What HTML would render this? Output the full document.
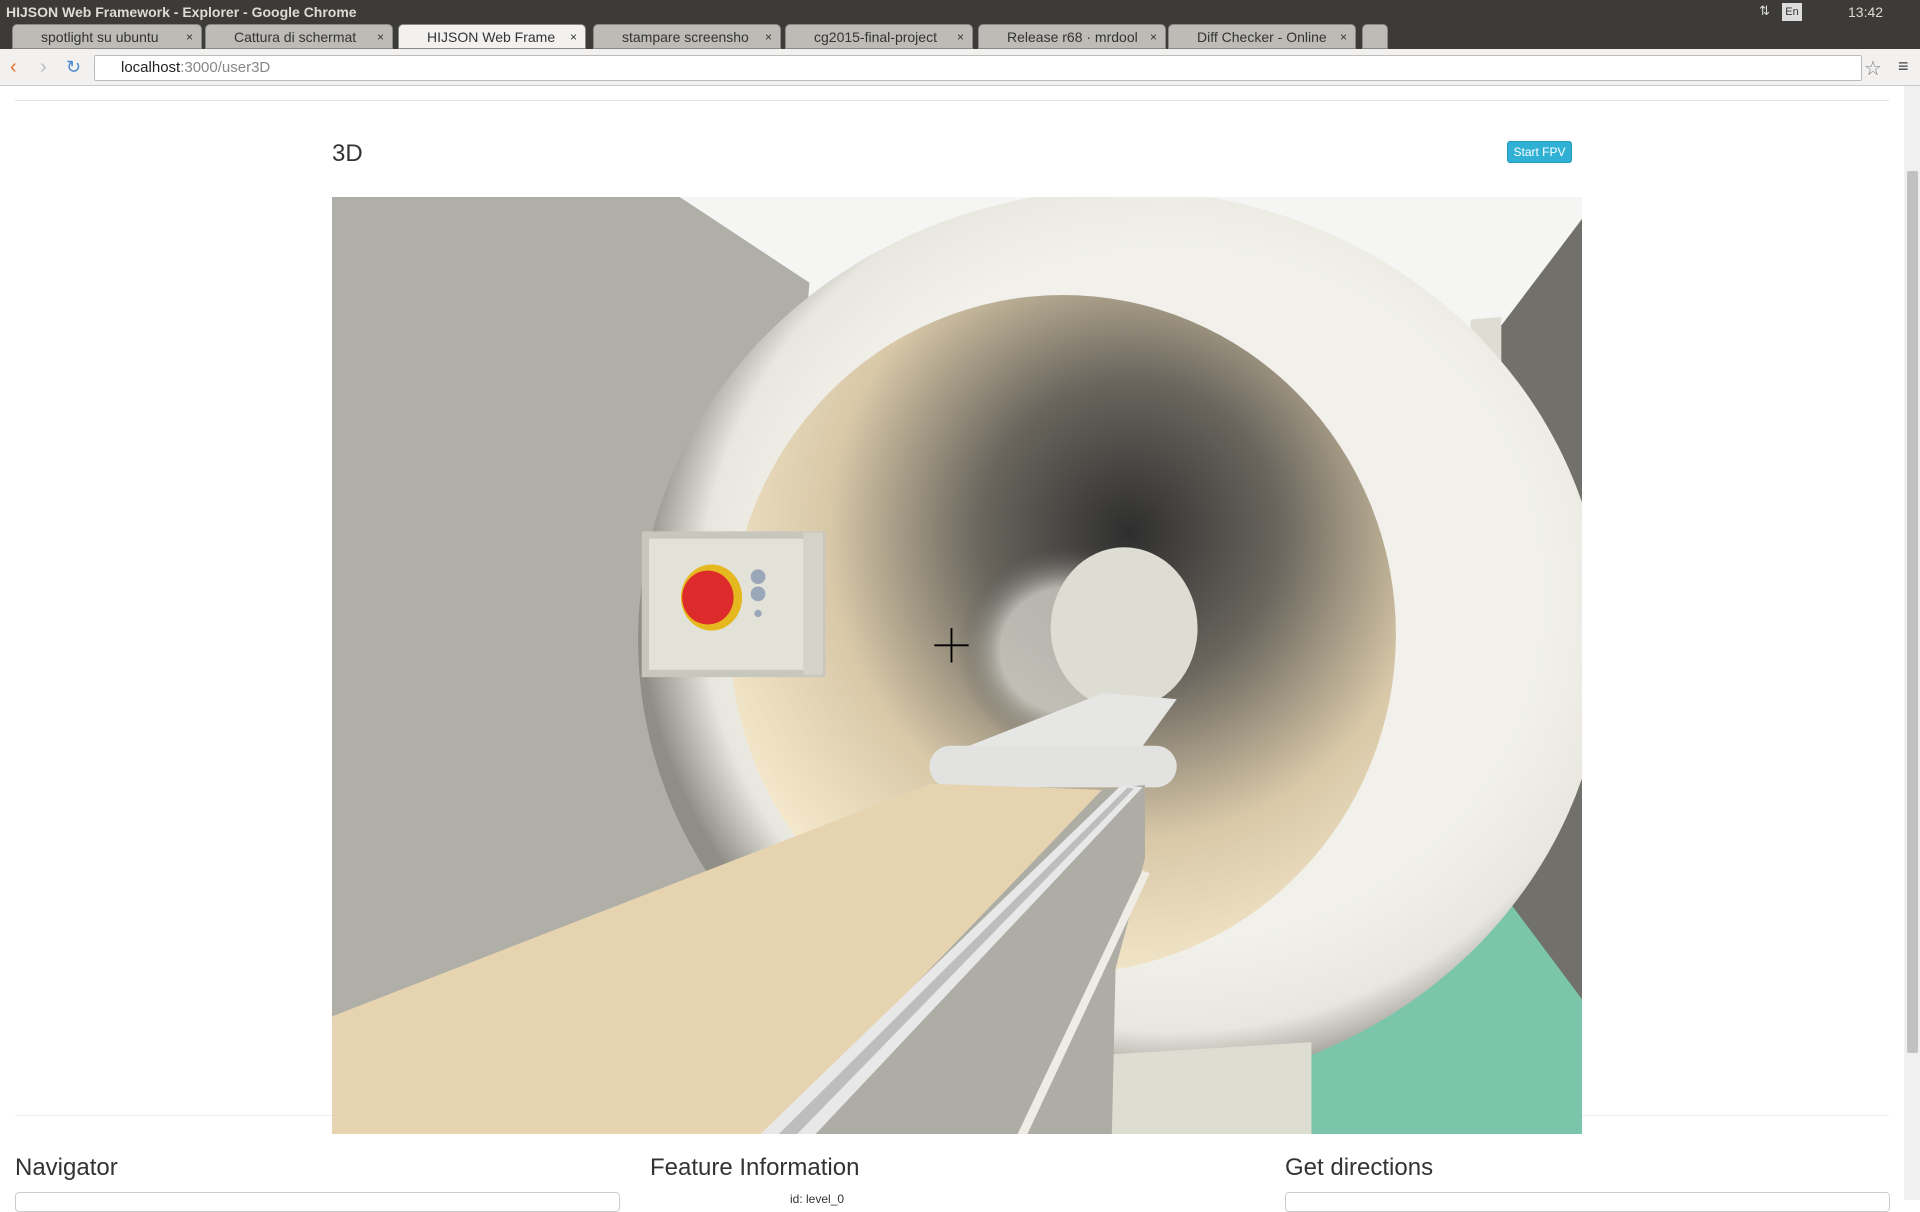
<!DOCTYPE html>
<html><head><meta charset="utf-8"><style>
*{margin:0;padding:0;box-sizing:border-box}
body{width:1920px;height:1200px;overflow:hidden;background:#fff;font-family:"Liberation Sans",sans-serif;position:relative}
.abs{position:absolute}
#title{left:0;top:0;width:1920px;height:24px;background:#3c3b37;color:#dfdbd2;font-size:14px;font-weight:bold;line-height:24px;padding-left:6px}
#tabs{left:0;top:24px;width:1920px;height:25px;background:#3c3b37}
.tab{position:absolute;top:0;height:25px;background:#bdbbb6;border-radius:5px 5px 0 0;font-size:14px;line-height:25px;color:#333;padding-left:28px;white-space:nowrap;overflow:hidden;border:1px solid #888}
.tab.act{background:#f2f1f0;color:#333}
.tab i{position:absolute;right:8px;top:0;font-style:normal;font-size:12px}
#bar{left:0;top:49px;width:1920px;height:37px;background:#f2f1f0;border-bottom:1px solid #ccc}
#url{left:94px;top:55px;width:1768px;height:26px;background:#fff;border:1px solid #bbb;border-radius:2px;font-size:15px;line-height:24px;padding-left:26px;color:#222}
#url span{color:#888}
h3{position:absolute;font-weight:normal;color:#333;font-size:24px}
</style></head><body>
<div class="abs" id="title">HIJSON Web Framework - Explorer - Google Chrome</div>
<div class="abs" style="right:150px;top:3px;color:#ddd;font-size:13px">⇅</div>
<div class="abs" style="left:1782px;top:3px;width:20px;height:18px;background:#ddd;color:#333;font-size:11px;text-align:center;line-height:18px">En</div>
<div class="abs" style="left:1848px;top:4px;color:#dfdbd2;font-size:14px">13:42</div>
<div class="abs" id="tabs">
<div class="tab" style="left:12px;width:190px">spotlight su ubuntu<i>×</i></div>
<div class="tab" style="left:205px;width:188px">Cattura di schermat<i>×</i></div>
<div class="tab act" style="left:398px;width:188px">HIJSON Web Frame<i>×</i></div>
<div class="tab" style="left:593px;width:188px">stampare screensho<i>×</i></div>
<div class="tab" style="left:785px;width:188px">cg2015-final-project<i>×</i></div>
<div class="tab" style="left:978px;width:188px">Release r68 · mrdool<i>×</i></div>
<div class="tab" style="left:1168px;width:188px">Diff Checker - Online<i>×</i></div>
<div class="tab" style="left:1362px;width:26px;padding:0"></div>
</div>
<div class="abs" id="bar"></div>
<div class="abs" style="left:10px;top:56px;color:#e07030;font-size:20px">‹</div>
<div class="abs" style="left:40px;top:56px;color:#bbb;font-size:20px">›</div>
<div class="abs" style="left:66px;top:57px;color:#4a88d0;font-size:18px">↻</div>
<div class="abs" id="url">localhost<span>:3000/user3D</span></div>
<div class="abs" style="left:1864px;top:56px;color:#777;font-size:20px">☆</div>
<div class="abs" style="left:1898px;top:56px;color:#444;font-size:18px">≡</div>
<div class="abs" style="left:15px;top:100px;width:1874px;height:1px;background:#e5e5e5"></div>
<div class="abs" style="left:1904px;top:86px;width:16px;height:1114px;background:#f0f0f0"></div>
<div class="abs" style="left:1907px;top:171px;width:11px;height:882px;background:#c1c1c1;border-radius:2px"></div>
<h3 style="left:332px;top:140px">3D</h3>
<div class="abs" style="left:1507px;top:141px;width:65px;height:22px;background:#31b0d5;border:1px solid #269abc;border-radius:3px;color:#fff;font-size:12px;text-align:center;line-height:20px">Start FPV</div>
<div class="abs" style="left:15px;top:1115px;width:1874px;height:1px;background:#eee"></div>
<svg class="abs" style="left:332px;top:197px" width="1250" height="937" viewBox="0 0 1021 765" preserveAspectRatio="none">
<defs>
<radialGradient id="torus" cx="0.55" cy="0.45" r="0.55"><stop offset="0.7" stop-color="#f1f0ea"/><stop offset="0.88" stop-color="#e8e7df"/><stop offset="1" stop-color="#8e8d86"/></radialGradient>
<radialGradient id="inner" cx="0.6" cy="0.35" r="0.75" fx="0.6" fy="0.35"><stop offset="0" stop-color="#2e2e2e"/><stop offset="0.3" stop-color="#6a665e"/><stop offset="0.6" stop-color="#d8c8a8"/><stop offset="1" stop-color="#fff3d6"/></radialGradient>
<radialGradient id="hole" cx="0.5" cy="0.5" r="0.5"><stop offset="0.6" stop-color="#cfcec6"/><stop offset="1" stop-color="#5a5a58" stop-opacity="0"/></radialGradient>
</defs>
<rect width="1021" height="765" fill="#f5f5f4"/>
<polygon points="0,0 284,0 390,70 330,765 0,765" fill="#b0afa7"/>
<polygon points="1021,18 955,105 955,700 1021,700" fill="#71706b"/>
<polygon points="930,100 955,98 955,140 930,140" fill="#deddd4"/>
<polygon points="950,560 1021,655 1021,765 790,765 790,690" fill="#7bc6ab"/>
<ellipse cx="645" cy="362" rx="395" ry="368" fill="url(#torus)"/>
<polygon points="637,700 800,690 800,765 637,765" fill="#deddd2"/>
<ellipse cx="597" cy="357" rx="272" ry="277" fill="url(#inner)"/>
<ellipse cx="600" cy="370" rx="90" ry="85" fill="url(#hole)" opacity="0.8"/>
<ellipse cx="647" cy="352" rx="60" ry="66" fill="#deddd4"/>
<polygon points="490,460 630,405 690,410 650,465" fill="#e6e6e4"/>
<rect x="488" y="448" width="202" height="34" rx="17" fill="#e2e2e0"/>
<polygon points="0,669 489,479 629,484 359,765 0,765" fill="#e6d3b0"/>
<polygon points="359,765 629,484 664,480 664,540 640,630 637,765" fill="#aeada5"/>
<polygon points="350,765 645,480 662,482 395,765" fill="#e8e8e8"/>
<polygon points="365,765 650,482 655,483 380,765" fill="#bdbdbd"/>
<polygon points="560,765 662,550 668,552 568,765" fill="#eeece4"/>
<rect x="256" y="276" width="144" height="113" fill="#e3e2d8" stroke="#c8c7bd" stroke-width="6"/>
<rect x="385" y="274" width="16" height="116" fill="#d4d3ca"/>
<ellipse cx="310" cy="327" rx="25" ry="27" fill="#e6b820"/>
<ellipse cx="307" cy="327" rx="21" ry="22" fill="#dd2b2b"/>
<circle cx="348" cy="310" r="6" fill="#9aa7b8"/>
<circle cx="348" cy="324" r="6" fill="#9aa7b8"/>
<circle cx="348" cy="340" r="3" fill="#9aa7b8"/>
<path d="M506 352V380M492 366H520" stroke="#000" stroke-width="1.5"/>
</svg>
<h3 style="left:15px;top:1154px">Navigator</h3>
<h3 style="left:650px;top:1154px">Feature Information</h3>
<h3 style="left:1285px;top:1154px">Get directions</h3>
<div class="abs" style="left:15px;top:1192px;width:605px;height:20px;border:1px solid #ccc;border-radius:4px"></div>
<div class="abs" style="left:1285px;top:1192px;width:605px;height:20px;border:1px solid #ccc;border-radius:4px"></div>
<div class="abs" style="left:790px;top:1192px;font-size:12px;color:#333">id: level_0</div>
</body></html>
